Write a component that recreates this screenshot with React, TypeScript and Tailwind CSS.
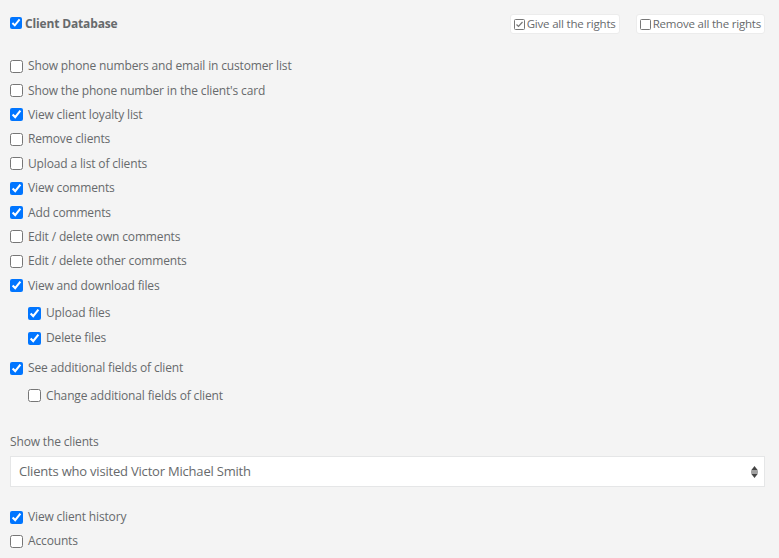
import React from "react";

const font = { fontFamily: '"Open Sans", "Noto Sans", sans-serif' };

function Row({ label, checked, nested }: { label: string; checked?: boolean; nested?: boolean }) {
  return (
    <label className={`flex items-center h-[24.4px] ${nested ? "pl-[18px]" : ""}`}>
      <input type="checkbox" defaultChecked={checked} className="m-0 w-[13px] h-[13px] shrink-0" />
      <span className="ml-[5px] text-[12px] tracking-[-0.15px] text-[#676a6c]">{label}</span>
    </label>
  );
}

function SquareIcon({ checked }: { checked?: boolean }) {
  return (
    <svg width="11" height="11" viewBox="0 0 11 11" className="shrink-0">
      <rect x="0.5" y="0.5" width="10" height="10" rx="1" fill="none" stroke="#777" strokeWidth="1" />
      {checked && <path d="M2.5 5.5 L4.5 7.5 L8.5 3" fill="none" stroke="#777" strokeWidth="1.2" />}
    </svg>
  );
}

export default function App() {
  return (
    <div className="w-[779px] h-[558px] bg-[#f4f4f4] pl-[10px] pr-[14px] overflow-hidden" style={font}>
      <div className="flex items-center justify-between h-[48px]">
        <label className="flex items-center">
          <input type="checkbox" defaultChecked className="m-0 w-[12px] h-[12px] -mt-[3px]" />
          <span className="ml-[3px] text-[12px] tracking-[-0.15px] font-bold text-[#676a6c]">Client Database</span>
        </label>
        <div className="flex items-center gap-[16px]">
          <button className="flex items-center gap-[2px] h-[20px] px-[3px] bg-white border border-[#ececec] rounded-[3px] text-[11.5px] tracking-[-0.2px] text-[#676a6c]">
            <SquareIcon checked />
            <span>Give all the rights</span>
          </button>
          <button className="flex items-center gap-[2px] h-[20px] px-[3px] bg-white border border-[#ececec] rounded-[3px] text-[11.5px] tracking-[-0.2px] text-[#676a6c]">
            <SquareIcon />
            <span>Remove all the rights</span>
          </button>
        </div>
      </div>

      <div className="pt-[6px]">
        <Row label="Show phone numbers and email in customer list" />
        <Row label="Show the phone number in the client's card" />
        <Row label="View client loyalty list" checked />
        <Row label="Remove clients" />
        <Row label="Upload a list of clients" />
        <Row label="View comments" checked />
        <Row label="Add comments" checked />
        <Row label="Edit / delete own comments" />
        <Row label="Edit / delete other comments" />
        <Row label="View and download files" checked />
        <div className="pt-[3px] pb-[5px]">
          <div className="[&>label]:h-[25px]">
            <Row label="Upload files" checked nested />
            <Row label="Delete files" checked nested />
          </div>
        </div>
        <Row label="See additional fields of client" checked />
        <div className="pt-[3px] [&>label]:h-[25px]">
          <Row label="Change additional fields of client" nested />
        </div>
      </div>

      <div className="mt-[24px] text-[12px] tracking-[-0.15px] text-[#676a6c] h-[19px] leading-[19px]">Show the clients</div>
      <div className="mt-[5px] h-[31px] bg-white border border-[#e5e6e7] flex items-center justify-between pl-[8px] pr-[6px]">
        <span className="text-[13px] tracking-[-0.2px] text-[#676a6c]">Clients who visited Victor Michael Smith</span>
        <svg width="7" height="12" viewBox="0 0 7 12">
          <path d="M3.5 0 L7 4.5 L0 4.5 Z" fill="#444" />
          <rect x="0" y="5.5" width="7" height="1" fill="#444" />
          <path d="M0 7.5 L7 7.5 L3.5 12 Z" fill="#444" />
        </svg>
      </div>
      <div className="pt-[18px] [&>label]:h-[24px]">
        <Row label="View client history" checked />
        <Row label="Accounts" />
      </div>
    </div>
  );
}
